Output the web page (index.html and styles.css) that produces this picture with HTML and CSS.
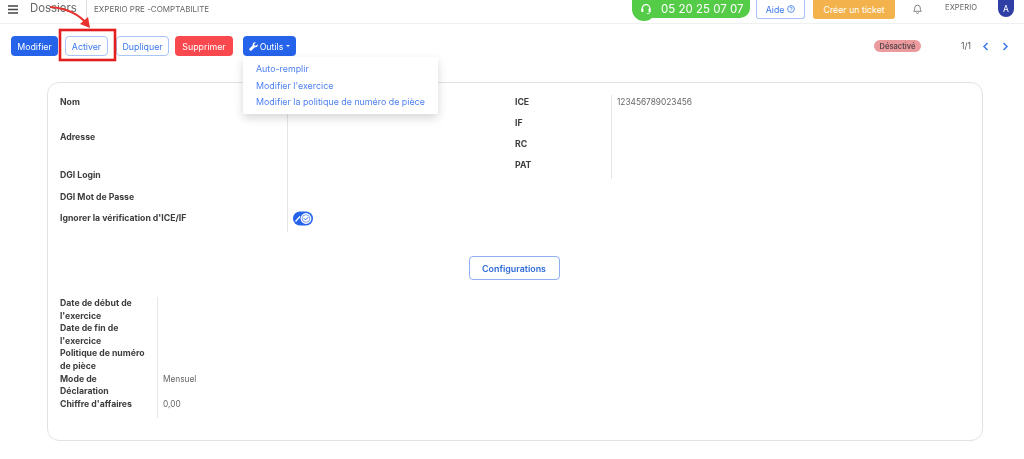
FILE: index.html
```html
<!DOCTYPE html>
<html lang="fr">
<head>
<meta charset="utf-8">
<title>Dossiers</title>
<link rel="stylesheet" href="styles.css">
</head>
<body>
<header class="topbar">
  <div class="top-left">
    <svg class="burger" width="10" height="9" viewBox="0 0 10 9"><path d="M0 1h10M0 4.500h10M0 8h10" stroke="#444" stroke-width="1.500"/></svg>
    <span class="crumb">Dossiers</span>
    <span class="company">EXPERIO PRE -COMPTABILITE</span>
  </div>
  <div class="top-right">
    <div class="phone">
      <svg class="headset" width="12" height="12" viewBox="0 0 14 14" fill="none"><path d="M2.500 8V6.500a4.500 4.500 0 0 1 9 0V8" stroke="#fff" stroke-width="1.500"/><rect x="1.500" y="6.500" width="2.500" height="4" rx="1" fill="#fff"/><rect x="10" y="6.500" width="2.500" height="4" rx="1" fill="#fff"/><path d="M11.500 10.500c0 1.500-1.500 2-3.500 2" stroke="#fff"/></svg>
      <span>05 20 25 07 07</span>
    </div>
    <a class="help">Aide <svg width="8" height="8" viewBox="0 0 8 8" fill="none"><circle cx="4" cy="4" r="3.400" stroke="#3b78f0" stroke-width=".8"/><path d="M2.900 3.200a1.100 1.100 0 1 1 1.500 1c-.3.100-.4.300-.4.600M4 5.600v.5" stroke="#3b78f0" stroke-width=".7"/></svg></a>
    <a class="ticket">Créer un ticket</a>
    <svg class="bell" width="9" height="11" viewBox="0 0 9 11" fill="none"><path d="M.7 8.300c.8-.8 1-1.500 1-3.300a2.800 2.800 0 0 1 5.600 0c0 1.800.2 2.500 1 3.300z" stroke="#666" stroke-width=".8"/><path d="M3.500 9.500a1 1 0 0 0 2 0" stroke="#666" stroke-width=".8"/></svg>
    <span class="user">EXPERIO</span>
    <span class="avatar">A</span>
  </div>
</header>

<section class="toolbar">
  <div class="actions">
    <button class="btn solid">Modifier</button>
    <button class="btn outline activer">Activer</button>
    <button class="btn outline dupliquer">Dupliquer</button>
    <button class="btn danger">Supprimer</button>
    <div class="tools">
      <button class="btn solid outils">
        <svg width="9" height="9" viewBox="0 0 9 9"><path d="M8.600 2.200 7 3.700 5.500 3.400 5.200 2 6.800.4C5.500 0 4.200.6 3.800 1.700c-.2.500-.2 1 0 1.500L.5 6.500a1.100 1.100 0 0 0 0 1.500l.5.500a1.100 1.100 0 0 0 1.500 0l3.300-3.300c1.500.5 3-.4 3-2.100 0-.3-.1-.6-.2-.9z" fill="#fff"/></svg>
        Outils
        <span class="caret"></span>
      </button>
      <div class="menu">
        <a>Auto-remplir</a>
        <a>Modifier l'exercice</a>
        <a>Modifier la politique de numéro de pièce</a>
      </div>
    </div>
  </div>
  <div class="status">
    <span class="badge">Désactivé</span>
    <span class="pager">1/1</span>
    <svg class="chev" width="7" height="9" viewBox="0 0 7 9" fill="none"><path d="M5.500 1 2 4.500 5.500 8" stroke="#3b78f0" stroke-width="1.500"/></svg>
    <svg class="chev" width="7" height="9" viewBox="0 0 7 9" fill="none"><path d="M1.500 1 5 4.500 1.500 8" stroke="#3b78f0" stroke-width="1.500"/></svg>
  </div>
</section>

<main class="card">
  <div class="top-fields">
    <dl class="fields left-fields">
      <dt>Nom</dt><dd></dd>
      <dt>Adresse</dt><dd></dd>
      <dt>DGI Login</dt><dd></dd>
      <dt>DGI Mot de Passe</dt><dd></dd>
      <dt>Ignorer la vérification d'ICE/IF</dt>
      <dd>
        <svg class="toggle" width="20" height="15" viewBox="0 0 20 15"><rect y="0.500" width="20" height="14" rx="7" fill="#2563eb"/><path d="M2.500 10.500 7 5.500" stroke="#fff" stroke-width="1.200"/><circle cx="13" cy="7.500" r="5.400" fill="#fff"/><circle cx="13" cy="7.500" r="3.800" fill="none" stroke="#2563eb" stroke-width=".6"/><path d="M11 7.400l1.500 1.500 2.700-2.700" fill="none" stroke="#2563eb" stroke-width="1"/></svg>
      </dd>
    </dl>
    <dl class="fields right-fields">
      <dt>ICE</dt><dd>123456789023456</dd>
      <dt>IF</dt><dd></dd>
      <dt>RC</dt><dd></dd>
      <dt>PAT</dt><dd></dd>
    </dl>
  </div>
  <div class="config-row"><button class="config">Configurations</button></div>
  <dl class="fields bottom-fields">
    <dt>Date de début de l'exercice</dt><dd></dd>
    <dt>Date de fin de l'exercice</dt><dd></dd>
    <dt>Politique de numéro de pièce</dt><dd></dd>
    <dt>Mode de Déclaration</dt><dd>Mensuel</dd>
    <dt>Chiffre d'affaires</dt><dd>0,00</dd>
  </dl>
</main>

<svg class="annotation" width="130" height="70" viewBox="0 0 130 70" fill="none">
  <path d="M50 7C66 8 79 14 88 25" stroke="#e8322e" stroke-width="2"/>
  <path d="M90 28 80 24 88 17z" fill="#e8322e"/>
  <rect x="60" y="30" width="55" height="30" stroke="#e41e1e" stroke-width="2.600"/>
</svg>
</body>
</html>
```
FILE: styles.css
```css
* { box-sizing: border-box; }
html, body { margin: 0; padding: 0; height: 100%; overflow: hidden; }
body {
  position: relative;
  background: #fff;
  color: #555;
  font-family: Inter, "Liberation Sans", sans-serif;
  font-size: 8.800px;
  filter: blur(.3px);
}
.topbar {
  height: 24px;
  display: flex;
  justify-content: space-between;
  align-items: flex-start;
  border-bottom: 1px solid #f0f0f0;
  padding: 0 10px 0 8px;
}
.top-left { display: flex; align-items: center; height: 23px; }
.burger { margin-right: 12px; margin-top: -5px; }
.crumb { font-size: 11.400px; color: #666; width: 57px; height: 23px; line-height: 16px; border-right: 1px solid #ddd; }
.company { margin-left: 7px; margin-top: -5px; font-size: 8px; color: #666; }
.top-right { display: flex; align-items: flex-start; }
.phone {
  width: 118px;
  height: 18px;
  margin-right: 6px;
  display: flex;
  align-items: center;
  background: #55cc47;
  color: #fff;
  border-radius: 0 0 10px 10px;
  font-size: 11.500px;
  position: relative;
}
.phone::before {
  content: "";
  position: absolute;
  left: 0; top: 0;
  width: 24px; height: 21px;
  border-radius: 0 0 12px 12px;
  background: #55cc47;
}
.headset { position: relative; margin: 0 9px 0 8px; }
.help {
  width: 49px; height: 19px;
  margin-right: 8px;
  display: flex; align-items: center; justify-content: center; gap: 3px;
  border: 1px solid #a9c4f5; border-top: 0;
  border-radius: 0 0 3px 3px;
  color: #3b78f0;
}
.ticket {
  width: 82px; height: 19px;
  margin-right: 18px;
  display: flex; align-items: center; justify-content: center;
  background: #f3b24b;
  color: #fff;
  border-radius: 0 0 3px 3px;
}
.bell { margin: 3px 23px 0 0; }
.user { margin: 3px 21px 0 0; font-size: 7.600px; color: #666; }
.avatar {
  width: 16px; height: 17px;
  display: flex; align-items: center; justify-content: center;
  border-radius: 0 0 8px 8px;
  background: #2f3fa5;
  color: #fff;
  font-size: 8.500px;
}
.toolbar {
  display: flex;
  justify-content: space-between;
  align-items: flex-start;
  padding: 12px 15px 0 11px;
  height: 58px;
}
.actions { display: flex; align-items: center; }
.btn {
  height: 20px;
  padding: 0;
  font: inherit;
  border-radius: 4px;
  display: inline-flex; align-items: center; justify-content: center;
  border: 1px solid transparent;
}
.solid { background: #2563eb; color: #fff; width: 47px; margin-right: 7px; }
.outline { background: #fff; border-color: #a9c4f5; color: #3b78f0; }
.activer { width: 43px; margin-right: 8px; }
.dupliquer { width: 53px; margin-right: 6px; }
.danger { background: #f9494f; color: #fff; width: 58px; margin-right: 10px; }
.tools { position: relative; }
.outils { width: 53px; margin: 0; gap: 2px; }
.caret { border: 2.500px solid transparent; border-top-color: #fff; border-bottom: 0; margin-left: 1px; }
.menu {
  position: absolute;
  left: 0; top: 21px;
  z-index: 2;
  width: 195px;
  height: 57px;
  padding: 5px 0 0 13px;
  display: flex; flex-direction: column;
  background: #fff;
  border-radius: 2px;
  box-shadow: 0 4px 10px rgba(0,0,0,.16);
  color: #4d7ff0;
  font-size: 8.870px;
}
.menu a { height: 16.500px; line-height: 14px; white-space: nowrap; }
.status { display: flex; align-items: center; height: 20px; }
.badge {
  width: 47px; height: 12px;
  display: flex; align-items: center; justify-content: center;
  margin-right: 40px;
  border-radius: 6px;
  background: #eb9a9e;
  color: #5a4a4c;
  font-size: 7.500px;
  font-weight: 600;
}
.pager { margin-right: 11px; font-size: 8.500px; }
.chev { margin-right: 13px; }
.chev:last-child { margin-right: 0; }
.card {
  width: 936px;
  height: 359px;
  margin-left: 47px;
  padding: 12px 12px 0;
  border: 1px solid #e2e2e2;
  border-radius: 12px;
  background: #fff;
}
.top-fields { display: flex; }
.fields { display: grid; margin: 0; }
.fields dt { font-weight: 650; color: #3d3d3d; line-height: 15px; font-size: 8.700px; }
.fields dd { margin: 0; padding-left: 5px; line-height: 15px; border-left: 1px solid #e6e6e6; color: #666; font-size: 8.300px; }
.left-fields { width: 455px; grid-template-columns: 227px 1fr; grid-template-rows: 35px 38px 22px 21px 21px; }
.left-fields dd { width: 1px; padding: 0 0 0 5px; overflow: visible; }
.toggle { display: block; }
.right-fields { grid-template-columns: 96px 200px; grid-template-rows: repeat(4, 21px); height: 85px; }
.config-row { display: flex; justify-content: center; margin-top: 24px; padding-right: 2px; }
.config {
  width: 91px; height: 24px;
  padding: 0;
  font: inherit;
  font-size: 8.900px;
  font-weight: 600;
  color: #2f6bd8;
  background: #fff;
  border: 1px solid #8fb0ee;
  border-radius: 4px;
}
.bottom-fields {
  margin-top: 17px;
  grid-template-columns: 97px 200px;
  grid-auto-rows: min-content;
}
.bottom-fields dt { line-height: 12.600px; padding-right: 11px; }
.bottom-fields dd { line-height: 12.600px; padding-left: 5px; }
.bottom-fields dt:last-of-type, .bottom-fields dd:last-of-type { padding-bottom: 8px; }
.annotation { position: absolute; left: 0; top: 0; z-index: 3; pointer-events: none; }
```
